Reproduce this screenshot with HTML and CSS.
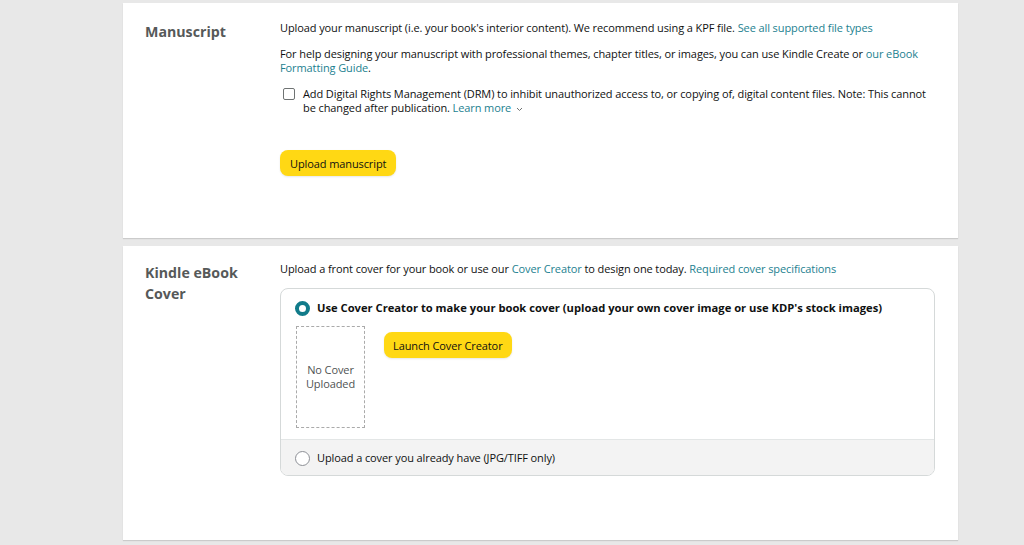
FILE: index.html
```html
<!DOCTYPE html>
<html>
<head>
<meta charset="utf-8">
<link rel="stylesheet" href="styles.css">
</head>
<body>
<div class="page">
  <section class="card card-manuscript">
    <h2 class="label">Manuscript</h2>
    <div class="content">
      <p class="para">Upload your manuscript (i.e. your book's interior content). We recommend using a KPF file. <a class="link">See all supported file types</a></p>
      <p class="para">For help designing your manuscript with professional themes, chapter titles, or images, you can use Kindle Create or <a class="link">our eBook Formatting Guide</a>.</p>
      <div class="check-row">
        <span class="checkbox"></span>
        <span class="check-text">Add Digital Rights Management (DRM) to inhibit unauthorized access to, or copying of, digital content files. Note: This cannot be changed after publication. <a class="link">Learn more <svg class="chev" width="7" height="5" viewBox="0 0 7 5"><path d="M1 1l2.5 2.5L6 1" fill="none" stroke="#6f7373" stroke-width="1"/></svg></a></span>
      </div>
      <button class="btn btn-upload">Upload manuscript</button>
    </div>
  </section>
  <section class="card card-cover">
    <h2 class="label">Kindle eBook<br>Cover</h2>
    <div class="content">
      <p class="para">Upload a front cover for your book or use our <a class="link">Cover Creator</a> to design one today. <a class="link">Required cover specifications</a></p>
      <div class="options">
        <div class="opt opt-active">
          <div class="radio-row">
            <span class="radio radio-on"></span>
            <span class="radio-label bold">Use Cover Creator to make your book cover (upload your own cover image or use KDP's stock images)</span>
          </div>
          <div class="creator">
            <div class="placeholder">No Cover<br>Uploaded</div>
            <button class="btn btn-launch">Launch Cover Creator</button>
          </div>
        </div>
        <div class="opt opt-alt">
          <div class="radio-row">
            <span class="radio"></span>
            <span class="radio-label">Upload a cover you already have (JPG/TIFF only)</span>
          </div>
        </div>
      </div>
    </div>
  </section>
</div>
</body>
</html>
```
FILE: styles.css
```css
* { box-sizing: border-box; }
html, body { margin: 0; padding: 0; }
body {
  background: #e8e8e8;
  font-family: "Open Sans", "Noto Sans", sans-serif;
  color: #0f1111;
  font-size: 11px;
  letter-spacing: -0.1px;
  width: 1024px;
  height: 545px;
  overflow: hidden;
}
.page {
  padding: 3px 66px 0 123px;
  display: flex;
  flex-direction: column;
  gap: 8px;
}
.card {
  background: #fff;
  display: flex;
  padding-left: 22px;
  box-shadow: 0 1px 1px rgba(0,0,0,0.12);
}
.card-manuscript { height: 235px; padding-top: 18px; }
.card-cover { height: 294px; padding-top: 16px; }
.label {
  width: 135px;
  margin: 0;
  font-size: 14.2px;
  letter-spacing: 0;
  font-weight: 700;
  color: #565959;
  line-height: 21px;
  flex-shrink: 0;
}
.content { flex: 1; padding-right: 22px; }
.para { margin: 0 0 12px; line-height: 14px; }
.link { color: #1c7f90; text-decoration: none; }
.check-row { display: flex; gap: 8px; align-items: flex-start; line-height: 14px; }
.checkbox {
  width: 12px; height: 12px; border: 1px solid #6f7373; border-radius: 2px;
  margin-top: 1px; flex-shrink: 0; margin-left: 3px;
}
.chev { vertical-align: middle; margin-left: 2px; }
.btn {
  font-family: inherit;
  font-size: 11px;
  letter-spacing: -0.1px;
  color: #0f1111;
  background: #ffd814;
  border: none;
  border-radius: 8px;
  padding: 0 10px;
  height: 26px;
  box-shadow: 0 1px 2px rgba(213,217,217,0.6);
}
.btn-upload { margin-top: 35px; }
.options {
  margin-top: 11px;
  border: 1px solid #d5d9d9;
  border-radius: 8px;
  width: 655px;
  overflow: hidden;
}
.opt-active { padding: 11px 14px 11px; }
.opt-alt { background: #f3f3f3; border-top: 1px solid #e3e6e6; padding: 10px 14px 9px; }
.radio-row { display: flex; align-items: center; gap: 7px; line-height: 16px; }
.radio {
  width: 15px; height: 15px; border-radius: 50%;
  border: 1px solid #8d9096; background: #fff; flex-shrink: 0;
}
.radio-label.bold { font-size: 11.2px; letter-spacing: 0; }
.radio-on { border: 4px solid #117b8a; }
.bold { font-weight: 700; }
.creator { display: flex; gap: 19px; margin-top: 10px; align-items: flex-start; padding-left: 1px; }
.placeholder {
  width: 69px; height: 102px;
  border: 1px dashed #aaa;
  display: flex; align-items: center; justify-content: center;
  text-align: center; color: #4f5353; line-height: 14px;
}
.btn-launch { margin-top: 6px; padding: 0 9px; }
```
